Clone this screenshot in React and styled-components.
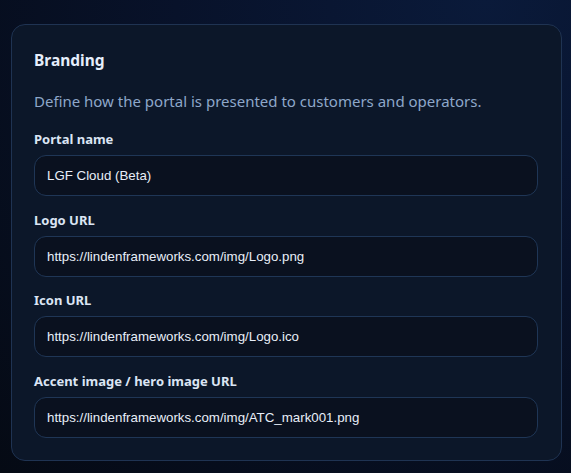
import React from 'react';
import styled, { createGlobalStyle } from 'styled-components';

const Global = createGlobalStyle`
  html, body {
    margin: 0;
    height: 100%;
  }
  body {
    background: radial-gradient(ellipse at 85% 0%, #0a1a3a 0%, #08122a 45%, #050a14 100%);
    background-color: #060c1a;
    font-family: "Noto Sans", "Open Sans", sans-serif;
  }
`;

const Page = styled.div`
  padding: 24px 9px 12px 11px;
  min-height: 473px;
  box-sizing: border-box;
`;

const Card = styled.section`
  background: #0c1729;
  border: 1px solid #1f3352;
  border-radius: 14px;
  padding: 24px 23px 22px 22px;
  display: flex;
  flex-direction: column;
`;

const Title = styled.h2`
  margin: 0;
  font-size: 15.5px;
  line-height: 22px;
  font-weight: 700;
  color: #e6eefb;
`;

const Desc = styled.p`
  margin: 18px 0 16px;
  font-size: 15px;
  line-height: 24px;
  color: #8ea7c9;
`;

const Fields = styled.div`
  display: flex;
  flex-direction: column;
  gap: 13.5px;
`;

const Field = styled.label`
  display: flex;
  flex-direction: column;
  gap: 6px;
`;

const Label = styled.span`
  font-size: 13px;
  line-height: 20px;
  font-weight: 700;
  color: #dbe5f4;
`;

const Input = styled.input`
  box-sizing: border-box;
  height: 41px;
  width: 100%;
  background: #0a111f;
  border: 1px solid #1f3656;
  border-radius: 12px;
  padding: 0 12px;
  font-family: "Liberation Sans", Arial, sans-serif;
  font-size: 13.3px;
  color: #e8eef8;
  outline: none;
`;

const fields = [
  { label: 'Portal name', value: 'LGF Cloud (Beta)' },
  { label: 'Logo URL', value: 'https://lindenframeworks.com/img/Logo.png' },
  { label: 'Icon URL', value: 'https://lindenframeworks.com/img/Logo.ico' },
  { label: 'Accent image / hero image URL', value: 'https://lindenframeworks.com/img/ATC_mark001.png' },
];

export default function App() {
  return (
    <Page>
      <Global />
      <Card>
        <Title>Branding</Title>
        <Desc>Define how the portal is presented to customers and operators.</Desc>
        <Fields>
          {fields.map((f) => (
            <Field key={f.label}>
              <Label>{f.label}</Label>
              <Input defaultValue={f.value} />
            </Field>
          ))}
        </Fields>
      </Card>
    </Page>
  );
}
